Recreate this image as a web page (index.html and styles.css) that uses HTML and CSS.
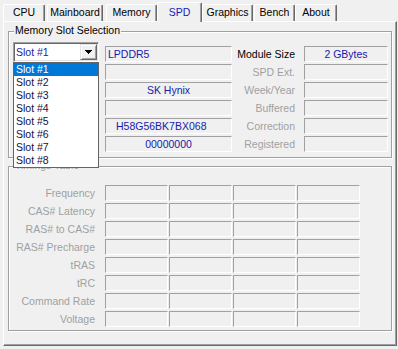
FILE: index.html
```html
<!DOCTYPE html>
<html lang="en">
<head>
  <meta charset="UTF-8" />
  <title>CPU-Z - SPD</title>
  <link rel="stylesheet" href="styles.css">
</head>
<body>

  <div class="tabs">
    <div class="tab tab-cpu">CPU</div>
    <div class="tab tab-mainboard">Mainboard</div>
    <div class="tab tab-memory">Memory</div>
    <div class="tab tab-spd active">SPD</div>
    <div class="tab tab-graphics">Graphics</div>
    <div class="tab tab-bench">Bench</div>
    <div class="tab tab-about">About</div>
  </div>

  <div class="panel">

    <div class="group slot-group">
      <span class="group-title">Memory Slot Selection</span>
      <div class="slot-grid">
        <div class="combo">
          <span class="combo-text">Slot #1</span>
          <span class="combo-btn">
            <svg width="7" height="4" viewBox="0 0 7 4" shape-rendering="crispEdges"><polygon points="0,0 7,0 3.5,4" fill="#000"/></svg>
          </span>
          <ul class="slot-list">
            <li class="selected">Slot #1</li>
            <li>Slot #2</li>
            <li>Slot #3</li>
            <li>Slot #4</li>
            <li>Slot #5</li>
            <li>Slot #6</li>
            <li>Slot #7</li>
            <li>Slot #8</li>
          </ul>
        </div>
        <div class="field value">LPDDR5</div>
        <div class="label">Module Size</div>
        <div class="field value center">2 GBytes</div>

        <div class="spacer"></div>
        <div class="field"></div>
        <div class="label dim">SPD Ext.</div>
        <div class="field"></div>

        <div class="spacer"></div>
        <div class="field value center">SK Hynix</div>
        <div class="label dim">Week/Year</div>
        <div class="field"></div>

        <div class="spacer"></div>
        <div class="field"></div>
        <div class="label dim">Buffered</div>
        <div class="field"></div>

        <div class="spacer"></div>
        <div class="field value part">H58G56BK7BX068</div>
        <div class="label dim">Correction</div>
        <div class="field"></div>

        <div class="spacer"></div>
        <div class="field value center">00000000</div>
        <div class="label dim">Registered</div>
        <div class="field"></div>
      </div>
    </div>

    <div class="group timings-group">
      <span class="group-title dim">Timings Table</span>
      <div class="timings-grid">
        <div class="label dim">Frequency</div>
        <div class="field"></div><div class="field"></div><div class="field"></div><div class="field"></div>
        <div class="label dim">CAS# Latency</div>
        <div class="field"></div><div class="field"></div><div class="field"></div><div class="field"></div>
        <div class="label dim">RAS# to CAS#</div>
        <div class="field"></div><div class="field"></div><div class="field"></div><div class="field"></div>
        <div class="label dim">RAS# Precharge</div>
        <div class="field"></div><div class="field"></div><div class="field"></div><div class="field"></div>
        <div class="label dim">tRAS</div>
        <div class="field"></div><div class="field"></div><div class="field"></div><div class="field"></div>
        <div class="label dim">tRC</div>
        <div class="field"></div><div class="field"></div><div class="field"></div><div class="field"></div>
        <div class="label dim">Command Rate</div>
        <div class="field"></div><div class="field"></div><div class="field"></div><div class="field"></div>
        <div class="label dim">Voltage</div>
        <div class="field"></div><div class="field"></div><div class="field"></div><div class="field"></div>
      </div>
    </div>

  </div>

</body>
</html>
```

FILE: styles.css
```css
body {
  margin: 0;
  background: #f0f0f0;
  font-family: 'Liberation Sans', Arial, sans-serif;
  font-size: 10.5px;
  color: #000;
}

/* tab strip */
.tabs {
  display: flex;
  align-items: flex-end;
  height: 21px;
  padding-left: 3px;
}

.tab {
  box-sizing: border-box;
  height: 17px;
  line-height: 15px;
  text-align: center;
  white-space: nowrap;
  border-top: 1px solid #fff;
  border-left: 1px solid #fff;
  border-right: 1px solid #696969;
  border-radius: 2px 2px 0 0;
  box-shadow: inset -1px 0 0 #a0a0a0;
}

.tab.active {
  position: relative;
  z-index: 1;
  height: 20px;
  margin-bottom: -1px;
  padding-top: 2px;
  background: #f0f0f0;
  color: #1a1ab4;
}

.tab-cpu { width: 42px; }
.tab-mainboard { width: 56px; margin-left: 2px; }
.tab-memory { width: 51px; margin-left: 3px; }
.tab-spd { width: 45px; }
.tab-graphics { width: 51px; }
.tab-bench { width: 41px; margin-left: 1px; }
.tab-about { width: 42px; }

/* tab page */
.panel {
  box-sizing: border-box;
  width: 394px;
  height: 325px;
  margin-left: 3px;
  padding: 9px 4px 0 4px;
  border: 1px solid #fff;
  border-right-color: #696969;
  border-bottom-color: #696969;
  box-shadow: inset -1px -1px 0 #a0a0a0;
}

.group {
  position: relative;
  border: 1px solid #a0a0a0;
  box-shadow: inset 1px 1px 0 #fff, 1px 1px 0 #fff;
  padding: 14px 3px 5px 4px;
}

.group-title {
  position: absolute;
  top: -8px;
  left: 5px;
  padding: 0 1px;
  line-height: 13px;
  background: #f0f0f0;
}

.timings-group {
  margin-top: 8px;
  padding: 18px 3px 3px 4px;
}

.slot-grid {
  display: grid;
  grid-template-columns: 86px 127px 60px 84px;
  grid-auto-rows: 16px;
  column-gap: 6px;
  row-gap: 2px;
}

.timings-grid {
  display: grid;
  grid-template-columns: 91px repeat(4, 63px);
  grid-auto-rows: 16px;
  column-gap: 1px;
  row-gap: 2px;
}

.label {
  justify-self: end;
  padding-right: 3px;
  line-height: 16px;
  white-space: nowrap;
}

.timings-grid .label {
  padding-right: 9px;
}

.dim {
  color: #a0a0a0;
}

.field {
  box-sizing: border-box;
  height: 16px;
  padding: 0 2px;
  line-height: 14px;
  white-space: nowrap;
  overflow: hidden;
  border-top: 1px solid #a0a0a0;
  border-left: 1px solid #a0a0a0;
  border-right: 1px solid #fff;
  border-bottom: 1px solid #fff;
}

.value {
  color: #1a1aa8;
}

.center {
  text-align: center;
}

.part {
  padding-left: 10px;
}

/* slot combo box, opened */
.combo {
  position: relative;
  box-sizing: border-box;
  display: flex;
  align-items: center;
  height: 20px;
  margin-top: -4px;
  padding: 1px 1px 1px 2px;
  border: 1px solid;
  border-color: #a0a0a0 #fff #fff #a0a0a0;
  box-shadow: inset 1px 1px 0 #696969, inset -1px -1px 0 #e3e3e3;
  background: #fff;
}

.combo-text {
  color: #1a1aa8;
  line-height: 16px;
}

.combo-btn {
  box-sizing: border-box;
  display: flex;
  align-items: center;
  justify-content: center;
  width: 17px;
  height: 16px;
  margin-left: auto;
  background: #f0f0f0;
  border: 1px solid;
  border-color: #e3e3e3 #696969 #696969 #e3e3e3;
  box-shadow: inset 1px 1px 0 #fff, inset -1px -1px 0 #a0a0a0;
}

.combo-btn svg {
  display: block;
}

.slot-list {
  position: absolute;
  top: calc(100% + 1px);
  left: -1px;
  z-index: 2;
  box-sizing: border-box;
  width: 86px;
  margin: 0;
  padding: 0;
  list-style: none;
  background: #fff;
  border: 1px solid #646464;
}

.slot-list li {
  height: 13px;
  padding-left: 2px;
  line-height: 13px;
  color: #101048;
}

.slot-list li.selected {
  background: #0078d7;
  color: #fff;
}
```
